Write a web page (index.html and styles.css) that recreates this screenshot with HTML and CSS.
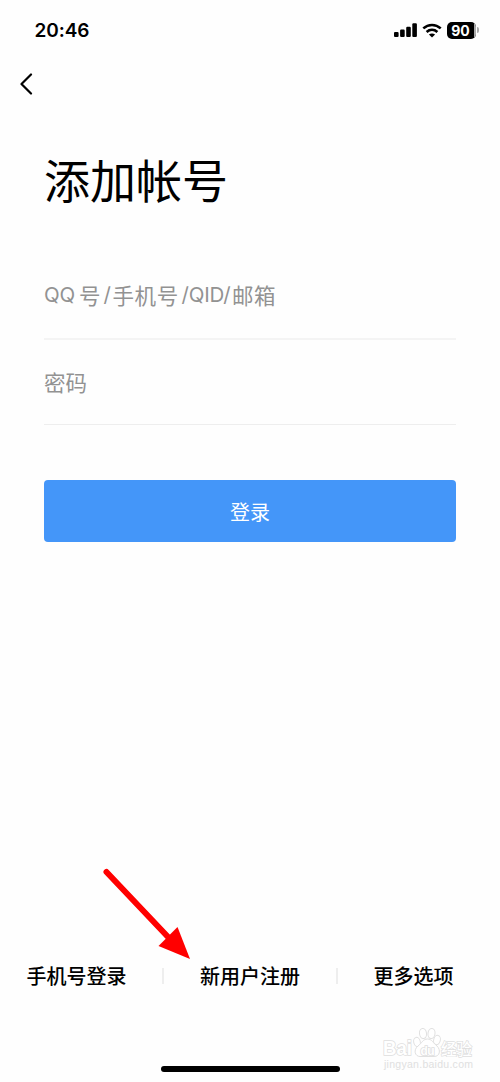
FILE: index.html
```html
<!DOCTYPE html>
<html lang="zh-CN">
<head>
<meta charset="utf-8">
<meta name="viewport" content="width=device-width, initial-scale=1">
<title>添加帐号</title>
<link rel="stylesheet" href="styles.css">
</head>
<body>
<div class="screen">
  <header class="status">
    <time class="clock">20:46</time>
    <div class="indicators">
      <svg class="signal" width="24" height="14" viewBox="0 0 24 14">
        <rect x="0" y="9" width="4.6" height="5" rx="1.1"/>
        <rect x="6.1" y="6.6" width="4.6" height="7.4" rx="1.1"/>
        <rect x="12.2" y="3.8" width="4.6" height="10.2" rx="1.1"/>
        <rect x="18.3" y="0.3" width="4.6" height="13.7" rx="1.1"/>
      </svg>
      <svg class="wifi" width="20" height="15" viewBox="0 0 20 15">
        <path class="wave" d="M1.300 5.400C6.300.8 13.700.8 18.700 5.400"/>
        <path class="wave" d="M4.600 9C7.800 6.200 12.200 6.200 15.400 9"/>
        <path d="M10 14.400L6.900 11.500C8.700 10 11.300 10 13.100 11.500Z"/>
      </svg>
      <div class="battery"><span class="level">90</span><i class="reserve"></i></div><i class="cap"></i>
    </div>
  </header>
  <nav class="nav">
    <svg width="14" height="22" viewBox="0 0 14 22"><path class="back" d="M12 1.500L2.500 11L12 20.500"/></svg>
  </nav>
  <main class="main">
    <h1 class="title">添加帐号</h1>
    <div class="field account"><span class="latin qq">QQ</span><span class="hao">号</span><span class="latin slash">/</span><span class="phone">手机号</span><span class="latin qid">/QID/</span><span class="mail">邮箱</span></div>
    <div class="field password">密码</div>
    <button class="login">登录</button>
  </main>
  <footer class="links">
    <a class="link">手机号登录</a><i class="divider"></i><a class="link">新用户注册</a><i class="divider"></i><a class="link">更多选项</a>
  </footer>
  <div class="home"></div>
  <svg class="arrow" width="92" height="96" viewBox="0 0 92 96">
    <path class="shaft" d="M7.500 7L70 73"/>
    <path class="head" d="M91 94L59.500 81L78.500 62Z"/>
  </svg>
  <svg class="watermark" width="96" height="48" viewBox="0 0 96 48">
    <text class="brand" x="2" y="31" textLength="29" lengthAdjust="spacingAndGlyphs">Bai</text>
    <g class="paw">
      <ellipse cx="36" cy="18" rx="3.300" ry="4.700" transform="rotate(-12 36 18)"/>
      <ellipse cx="42" cy="9.500" rx="3.500" ry="5" transform="rotate(-8 42 9.500)"/>
      <ellipse cx="50.500" cy="9.500" rx="3.500" ry="5" transform="rotate(8 50.500 9.500)"/>
      <ellipse cx="56" cy="16" rx="3.300" ry="4.700" transform="rotate(14 56 16)"/>
      <path d="M46.500 15C42 15 41 19 37 22C32 26 34 32.500 39 32.500H53C59 32.500 60 26 56 22C52 19 51 15 46.500 15Z"/>
    </g>
    <text class="du" x="39.500" y="30.500" textLength="14">du</text>
    <text class="cn" x="60" y="30.500" textLength="31">经验</text>
    <text class="site" x="3" y="44" textLength="89">jingyan.baidu.com</text>
  </svg>
</div>
</body>
</html>
```
FILE: styles.css
```css
* { box-sizing: border-box; }
body { margin: 0; background: #fff; color: #000; font-family: "Noto Sans CJK SC", sans-serif; }
.screen { position: relative; display: flex; flex-direction: column; width: 500px; height: 1082px; overflow: hidden; background: #fefefe; }
.status { display: flex; justify-content: space-between; align-items: center; height: 60px; padding: 0 21px 0 34.5px; }
.clock { padding-top: 1px; font: 600 19px/24px Inter, sans-serif; letter-spacing: -.1px; }
.indicators { display: flex; align-items: center; }
.signal { margin-left: -1px; }
.wifi { margin-left: 4px; }
.wave { fill: none; stroke: #000; stroke-width: 2.6; }
.battery { position: relative; display: flex; width: 29px; height: 17px; margin-left: 5px; border-radius: 5px; overflow: hidden; background: #000; }
.level { width: 27px; color: #fff; text-align: center; font: 700 14px/17px Inter, sans-serif; }
.reserve { flex: 1; background: #aaa; }
.cap { width: 2px; height: 6px; margin-left: 1px; border-radius: 0 2px 2px 0; background: #aaa; }
.nav { display: flex; align-items: center; height: 48px; padding-left: 19px; }
.back { fill: none; stroke: #000; stroke-width: 2.2; stroke-linecap: round; stroke-linejoin: round; }
.main { display: flex; flex-direction: column; padding: 36px 44px 0; }
.title { height: 68px; margin: 0 0 41px; font-size: 46px; line-height: 68px; font-weight: 400; }
.field { display: flex; align-items: center; height: 85px; border-bottom: 1px solid #eee; color: #929292; font-size: 21.5px; line-height: 30px; white-space: nowrap; }
.account { height: 87px; padding-bottom: 2px; border-bottom-width: 2px; border-color: #f4f4f4; }
.latin { padding-top: 1px; font-family: Inter, sans-serif; font-size: 20.5px; }
.qq { width: 35px; letter-spacing: -.3px; }
.hao { width: 24.5px; }
.slash { width: 9px; }
.phone { width: 69px; letter-spacing: .6px; }
.qid { width: 50.5px; letter-spacing: -.2px; }
.mail { letter-spacing: .5px; }
.login { height: 62px; margin-top: 55px; border: 0; border-radius: 4px; padding: 1px 0 0; background: #4496f9; color: #fff; font: 400 20px/61px "Noto Sans CJK SC", sans-serif; }
.links { display: flex; align-items: center; height: 30px; margin-top: 419px; padding-left: 26.5px; }
.link { font-size: 20px; line-height: 30px; font-weight: 500; }
.divider { width: 2px; height: 16px; margin: 0 36px 0 35.5px; background: #eee; }
.home { width: 179px; height: 6px; margin: 75px auto 0 160.5px; border-radius: 3px; background: #000; }
.arrow { position: absolute; left: 99px; top: 865px; }
.shaft { stroke: #f00; stroke-width: 6; stroke-linecap: round; }
.head { fill: #f00; }
.watermark { position: absolute; left: 381px; top: 1024px; fill: #fff; stroke: #dedede; stroke-width: 1; paint-order: stroke; }
.paw { stroke: #e0e0e0; paint-order: normal; }
.brand { font: 700 20px "Liberation Sans", sans-serif; stroke-width: 1.6; }
.cn { font: 500 15.500px/16px "Noto Sans CJK SC", sans-serif; stroke-width: 1.4; }
.du { font: 700 12px "Liberation Sans", sans-serif; stroke-width: 1.6; }
.site { font: 400 10.5px "Liberation Sans", sans-serif; fill: #e0e0e0; stroke: none; }
```
